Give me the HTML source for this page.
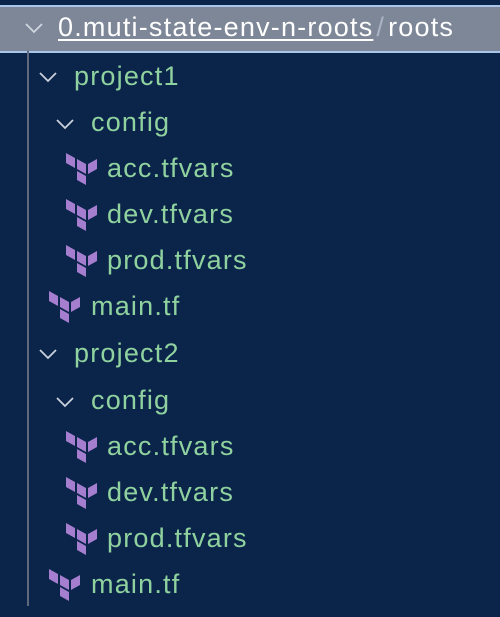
<!DOCTYPE html><html><head><style>
body{margin:0;width:500px;height:617px;background:#0b2449;overflow:hidden;font-family:"Liberation Sans",sans-serif;position:relative}
.hdr{position:absolute;left:0;top:5px;width:500px;height:44px;background:#7d8798;border-top:2px solid #a9c5ea;border-bottom:2px solid #a9c5ea}
.ht{position:absolute;left:58px;top:5px;font-size:27px;letter-spacing:1.2px;color:#fff;white-space:nowrap}
.ht u{text-underline-offset:3px}
.vl{position:absolute;left:27px;top:51px;width:2px;height:555px;background:#5e6a7c}
.r{position:absolute;font-size:27px;letter-spacing:1.2px;color:#8fd29f;line-height:30px}
.ch{position:absolute}
svg.ic{position:absolute}
</style></head><body>
<div class="hdr">
<svg class="ch" style="left:24px;top:14px" width="20" height="14"><path d="M2 3 L10 11 L18 3" stroke="#cfd6e0" stroke-width="1.8" fill="none"/></svg>
<div class="ht"><u>0.muti-state-env-n-roots</u><span style="color:#a9b3c1;margin:0 3px">/</span>roots</div>
</div>
<div class="vl"></div>
<svg width="0" height="0" style="position:absolute"><defs><g id="tf" fill="#a57ed0"><polygon points="0,0 9,5 9,15 0,10"/><polygon points="11,6 20,11 20,21 11,16"/><polygon points="11,18 20,23 20,32 11,27"/><polygon points="22,11 31,6 31,16 22,21"/></g>
<path id="cv" d="M2 3 L10 11 L18 3" stroke="#c9d1dc" stroke-width="1.8" fill="none"/></defs></svg>

<svg class="ch" style="left:38px;top:70px" width="20" height="14"><use href="#cv"/></svg><div class="r" style="left:74px;top:61px">project1</div>
<svg class="ch" style="left:55px;top:117px" width="20" height="14"><use href="#cv"/></svg><div class="r" style="left:91px;top:107px">config</div>
<svg class="ic" style="left:66px;top:153px" width="32" height="33"><use href="#tf"/></svg><div class="r" style="left:107px;top:153px">acc.tfvars</div>
<svg class="ic" style="left:66px;top:199px" width="32" height="33"><use href="#tf"/></svg><div class="r" style="left:107px;top:199px">dev.tfvars</div>
<svg class="ic" style="left:66px;top:245px" width="32" height="33"><use href="#tf"/></svg><div class="r" style="left:107px;top:245px">prod.tfvars</div>
<svg class="ic" style="left:49px;top:291px" width="32" height="33"><use href="#tf"/></svg><div class="r" style="left:91px;top:291px">main.tf</div>

<svg class="ch" style="left:38px;top:347px" width="20" height="14"><use href="#cv"/></svg><div class="r" style="left:74px;top:338px">project2</div>
<svg class="ch" style="left:55px;top:395px" width="20" height="14"><use href="#cv"/></svg><div class="r" style="left:91px;top:385px">config</div>
<svg class="ic" style="left:66px;top:431px" width="32" height="33"><use href="#tf"/></svg><div class="r" style="left:107px;top:431px">acc.tfvars</div>
<svg class="ic" style="left:66px;top:477px" width="32" height="33"><use href="#tf"/></svg><div class="r" style="left:107px;top:477px">dev.tfvars</div>
<svg class="ic" style="left:66px;top:523px" width="32" height="33"><use href="#tf"/></svg><div class="r" style="left:107px;top:523px">prod.tfvars</div>
<svg class="ic" style="left:49px;top:569px" width="32" height="33"><use href="#tf"/></svg><div class="r" style="left:91px;top:569px">main.tf</div>
</body></html>
